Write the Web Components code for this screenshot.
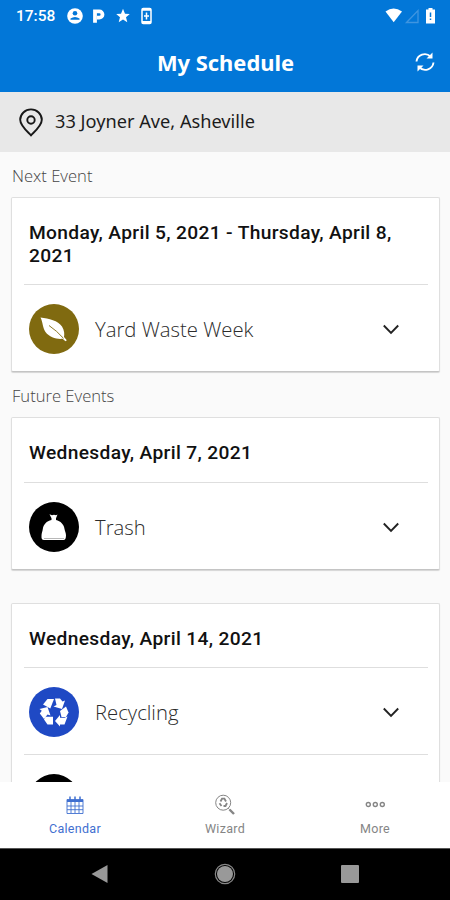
<!DOCTYPE html>
<html lang="en">
<head>
<meta charset="utf-8">
<title>My Schedule</title>
<style>
    html, body {
        margin: 0;
        height: 100%;
        overflow: hidden;
    }
</style>
</head>
<body>
<schedule-app>
    <status-bar slot="top"></status-bar>
    <title-bar slot="top">My Schedule</title-bar>
    <address-bar slot="top">33 Joyner Ave, Asheville</address-bar>

    <section-label>Next Event</section-label>
    <event-card>
        <span slot="date">Monday, April 5, 2021 - Thursday, April 8, 2021</span>
        <event-row icon="leaf" color="#806a10">Yard Waste Week</event-row>
    </event-card>
    <section-label>Future Events</section-label>
    <event-card>
        <span slot="date">Wednesday, April 7, 2021</span>
        <event-row icon="bag" color="#000">Trash</event-row>
    </event-card>
    <event-card class="spaced">
        <span slot="date">Wednesday, April 14, 2021</span>
        <event-row icon="recycle" color="#1f49c4">Recycling</event-row>
        <event-row icon="bag" color="#000">Trash</event-row>
    </event-card>

    <tab-bar slot="bottom">
        <tab-item icon="calendar" active>Calendar</tab-item>
        <tab-item icon="wizard">Wizard</tab-item>
        <tab-item icon="more">More</tab-item>
    </tab-bar>
    <system-nav slot="bottom"></system-nav>
</schedule-app>

<script>
const ICONS = {
    leaf: `<svg width="50" height="50" viewBox="0 0 50 50">
        <path d="M11.500 13.500C20 14.500 29 16.500 33 22.500C35.500 26.500 35.500 30 35 33L37.800 36.200L36.500 37.300L33.600 34.800C28 35.500 20.500 33.500 16.500 28C13.500 23.500 14 18.500 11.500 13.500Z" fill="#fff"/>
        <path d="M20 21.500Q28 27 34.500 34.300" fill="none" stroke="#806a10" stroke-width=".9"/>
    </svg>`,
    bag: `<svg width="50" height="50" viewBox="0 0 50 50">
        <path d="M20.500 12.300L23 13.300L25 12.700L27 13.300L28.500 12.500L27 16.300V18C31.500 19 35 22.500 35.500 27C36 29.500 37 31 37 33.500C37 36.500 36 38 34.500 38H15C13 38 12.300 36.500 12.500 34C12.500 31 13.500 29.500 13.800 27C14.500 22.500 17.500 19 22.500 18V16.300Z" fill="#fff"/>
        <path d="M15 36.500H35" stroke="#999" stroke-width=".7"/>
    </svg>`,
    recycle: `<svg width="50" height="50" viewBox="0 0 50 50" fill="#fff">
        <path d="M18.500 12H25L21.300 21.500L14 17.500Z"/>
        <path d="M26 11.500H31L33.500 14.500L36 13.500L33 22L24.500 19.500L27.500 18Z"/>
        <path d="M31 24L37 19.500L39.500 25.500L37 30H32.500Z"/>
        <path d="M38.500 29.500L35.500 37.500H31V39.500L26 34L31 28V30.800H35.500Z"/>
        <path d="M16.500 29.800H24V37.500H18.500L15 32.500Z"/>
        <path d="M10.500 22L18.500 20L21.500 28.500L18.500 27.500L15 32L10.800 26.500L12.800 23.700Z"/>
    </svg>`,
    calendar: `<svg width="18" height="20" viewBox="0 0 18 20" fill="none" stroke="currentColor">
        <path d="M1 4.500H17V18.500H1ZM5 7V18M9 7V18M13 7V18M1 11H17M1 14.700H17" stroke-width=".9"/>
        <path d="M1 6H17" stroke-width="2"/>
        <path d="M4 1.500V5M9 1.500V5M14 1.500V5" stroke-width="1.500"/>
    </svg>`,
    wizard: `<svg width="22" height="22" viewBox="0 0 22 22" fill="none" stroke="currentColor">
        <circle cx="9.200" cy="8.700" r="7.500"/>
        <path d="M6.500 7.500L8 4.700H10.400L12 7.500M13 9L11.500 12H9.500M7.500 12L5.500 9.300" stroke-width="1.800"/>
        <path d="M14.200 14.200L15.500 15.500" stroke-width="1"/>
        <path d="M15.500 15.500L20 20" stroke-width="2.400"/>
    </svg>`,
    more: `<svg width="20" height="20" viewBox="0 0 20 20" fill="none" stroke="currentColor" stroke-width="1.400">
        <circle cx="3.300" cy="9.500" r="2"/><circle cx="10.300" cy="9.500" r="2"/><circle cx="17.300" cy="9.500" r="2"/>
    </svg>`
};

// Attaches an open shadow root filled with the given markup
class BaseElement extends HTMLElement {
    connectedCallback() {
        if (this.shadowRoot) return;
        this.attachShadow({ mode: 'open' });
        this.shadowRoot.innerHTML = this.render();
    }
}

class ScheduleApp extends BaseElement {
    render() {
        return `
            <style>
                :host {
                    display: flex;
                    flex-direction: column;
                    width: 450px;
                    height: 900px;
                    background: #fafafa;
                    font-family: "Open Sans", sans-serif;
                }
                .bar { flex: none; }
                main {
                    flex: 1;
                    min-height: 0;
                    overflow: hidden;
                    padding: 0 10.500px 0 11px;
                }
            </style>
            <div class="bar"><slot name="top"></slot></div>
            <main><slot></slot></main>
            <div class="bar"><slot name="bottom"></slot></div>
        `;
    }
}

class StatusBar extends BaseElement {
    render() {
        return `
            <style>
                :host {
                    display: flex;
                    align-items: center;
                    justify-content: space-between;
                    height: 32px;
                    padding: 0 14px 0 16px;
                    box-sizing: border-box;
                    background: #0277d8;
                    color: #fff;
                    font: 500 15.500px Roboto, sans-serif;
                }
                .group { display: flex; align-items: center; }
                .time { width: 51px; }
                svg { display: block; }
            </style>
            <div class="group">
                <span class="time">17:58</span>
                <svg width="86" height="18" viewBox="67 7 86 18">
                    <circle cx="75" cy="16" r="7.800" fill="#fff"/>
                    <circle cx="75" cy="13.300" r="2.300" fill="#0277d8"/>
                    <path d="M70.500 19.800V18.500Q75 15.300 79.500 18.500V19.800Z" fill="#0277d8"/>
                    <path d="M95 22.800V11.300H99.300A3.200 3.200 0 0 1 99.300 17.700H97" fill="none" stroke="#fff" stroke-width="3.800"/>
                    <path d="M123 8.800L125 13.700L129.800 14L126 17.200L127.300 22.300L123 19.500L118.700 22.300L120 17.200L116.200 14L121 13.700Z" fill="#fff"/>
                    <rect x="142" y="8.500" width="9" height="15" rx="1.300" fill="none" stroke="#fff" stroke-width="1.500"/>
                    <path d="M142 9.500H151M142 22.200H151" stroke="#fff" stroke-width="2.400"/>
                    <path d="M146.500 12.500V19.500M144 16H149" stroke="#fff" stroke-width="1.500"/>
                </svg>
            </div>
            <svg width="51" height="18" viewBox="385 7 51 18">
                <path d="M385.500 11.500Q393.500 5.500 402 11.500L393.700 22.300Z" fill="#fff"/>
                <path d="M406.500 22.500L418 10.500V22.500Z" fill="none" stroke="#3f95e0" stroke-width="1.300"/>
                <path d="M426 9.500H428.500V8H432.500V9.500H435V23.500H426Z" fill="#fff"/>
                <path d="M430.500 12.500V17M430.500 18.500V20" stroke="#0277d8" stroke-width="1.500"/>
            </svg>
        `;
    }
}

class TitleBar extends BaseElement {
    render() {
        return `
            <style>
                :host {
                    display: grid;
                    grid-template-columns: 1fr auto 1fr;
                    align-items: center;
                    height: 60px;
                    padding-right: 15px;
                    padding-left: 16px;
                    box-sizing: border-box;
                    background: #0277d8;
                    color: #fff;
                    font: 700 21.900px "Noto Sans", sans-serif;
                }
                .title { grid-column: 2; }
                svg { justify-self: end; }
            </style>
            <span class="title"><slot></slot></span>
            <svg width="20" height="20" viewBox="0 0 20 20" fill="none" stroke="#fff" stroke-width="1.900">
                <path d="M1.500 9.500A8.300 8.300 0 0 1 15.500 4.500M18.500 10.500A8.300 8.300 0 0 1 4.500 15.500"/>
                <path d="M17.500 .500V6.500H11.500ZM2.500 19.500V13.500H8.500Z" fill="#fff" stroke="none"/>
            </svg>
        `;
    }
}

class AddressBar extends BaseElement {
    render() {
        return `
            <style>
                :host {
                    display: flex;
                    align-items: center;
                    gap: 12px;
                    height: 60px;
                    padding: 0 0 0 19px;
                    box-sizing: border-box;
                    background: #e8e8e8;
                    color: #1c1c1c;
                    font: 400 18.200px "Noto Sans", sans-serif;
                }
                .text { padding-bottom: 3px; }
            </style>
            <svg width="24" height="29" viewBox="0 0 24 29" fill="none" stroke="#181818" stroke-width="1.900">
                <path d="M12 27.300C9 24 1.200 18 1.200 11.800A10.800 10.400 0 0 1 22.800 11.800C22.800 18 15 24 12 27.300Z"/>
                <circle cx="12" cy="12" r="3.700"/>
            </svg>
            <span class="text"><slot></slot></span>
        `;
    }
}

class SectionLabel extends BaseElement {
    render() {
        return `
            <style>
                :host {
                    display: block;
                    height: 45px;
                    padding-left: 1px;
                    box-sizing: border-box;
                    color: #444;
                    font: 300 16.600px/47px "Open Sans", sans-serif;
                }
            </style>
            <slot></slot>
        `;
    }
}

class EventCard extends BaseElement {
    render() {
        return `
            <style>
                :host {
                    display: block;
                    padding: 0 11px 0 12px;
                    border: 1px solid #dfdfdf;
                    border-bottom-color: #c4c4c4;
                    border-radius: 2px;
                    background: #fff;
                    box-shadow: 0 1px 1px rgba(0, 0, 0, 0.15);
                }
                :host(.spaced) { margin-top: 33px; }
                .date {
                    padding: 24px 5px 17px;
                    color: #111;
                    font: 500 19.200px/22.500px Roboto, sans-serif;
                    letter-spacing: 0.340px;
                }
            </style>
            <div class="date"><slot name="date"></slot></div>
            <slot></slot>
        `;
    }
}

class EventRow extends BaseElement {
    render() {
        return `
            <style>
                :host {
                    display: flex;
                    align-items: center;
                    height: 87px;
                    padding: 19px 28px 17px 5px;
                    box-sizing: border-box;
                    border-top: 1px solid #dedede;
                    color: #2c2c2c;
                    font: 300 20.300px "Open Sans", sans-serif;
                }
                .badge {
                    width: 50px;
                    height: 50px;
                    margin-right: 16px;
                    border-radius: 50%;
                    background: ${this.getAttribute('color')};
                }
                .name { flex: 1; }
                svg { display: block; }
            </style>
            <div class="badge">${ICONS[this.getAttribute('icon')]}</div>
            <span class="name"><slot></slot></span>
            <svg width="18" height="12" viewBox="0 0 18 12" fill="none" stroke="#222" stroke-width="1.900">
                <path d="M1.800 2.500L9 9.800L16.200 2.500"/>
            </svg>
        `;
    }
}

class TabBar extends BaseElement {
    render() {
        return `
            <style>
                :host {
                    display: grid;
                    grid-template-columns: repeat(3, 1fr);
                    height: 66px;
                    background: #fff;
                }
            </style>
            <slot></slot>
        `;
    }
}

class TabItem extends BaseElement {
    render() {
        return `
            <style>
                :host {
                    display: flex;
                    flex-direction: column;
                    align-items: center;
                    padding-top: 12px;
                    color: #858585;
                    font: 400 12.500px/16px Roboto, sans-serif;
                    letter-spacing: 0.300px;
                }
                :host([active]) { color: #3f6fd0; }
                .icon {
                    display: flex;
                    align-items: center;
                    justify-content: center;
                    height: 22px;
                    margin-bottom: 5px;
                }
            </style>
            <div class="icon">${ICONS[this.getAttribute('icon')]}</div>
            <span><slot></slot></span>
        `;
    }
}

class SystemNav extends BaseElement {
    render() {
        return `
            <style>
                :host {
                    display: flex;
                    align-items: center;
                    justify-content: space-between;
                    height: 52px;
                    padding: 0 91px;
                    box-sizing: border-box;
                    border-top: 1px solid #555;
                    background: #000;
                }
                svg { margin-top: -1px; }
            </style>
            <svg width="17" height="20" viewBox="0 0 17 20"><path d="M.500 10L16.500 1V19Z" fill="#999"/></svg>
            <svg width="22" height="22" viewBox="0 0 22 22">
                <circle cx="11" cy="11" r="9.700" fill="none" stroke="#888" stroke-width="1.200"/>
                <circle cx="11" cy="11" r="8" fill="#999"/>
            </svg>
            <svg width="18" height="18" viewBox="0 0 18 18"><rect width="18" height="18" rx="1" fill="#999"/></svg>
        `;
    }
}

customElements.define('schedule-app', ScheduleApp);
customElements.define('status-bar', StatusBar);
customElements.define('title-bar', TitleBar);
customElements.define('address-bar', AddressBar);
customElements.define('section-label', SectionLabel);
customElements.define('event-card', EventCard);
customElements.define('event-row', EventRow);
customElements.define('tab-bar', TabBar);
customElements.define('tab-item', TabItem);
customElements.define('system-nav', SystemNav);
</script>
</body>
</html>
